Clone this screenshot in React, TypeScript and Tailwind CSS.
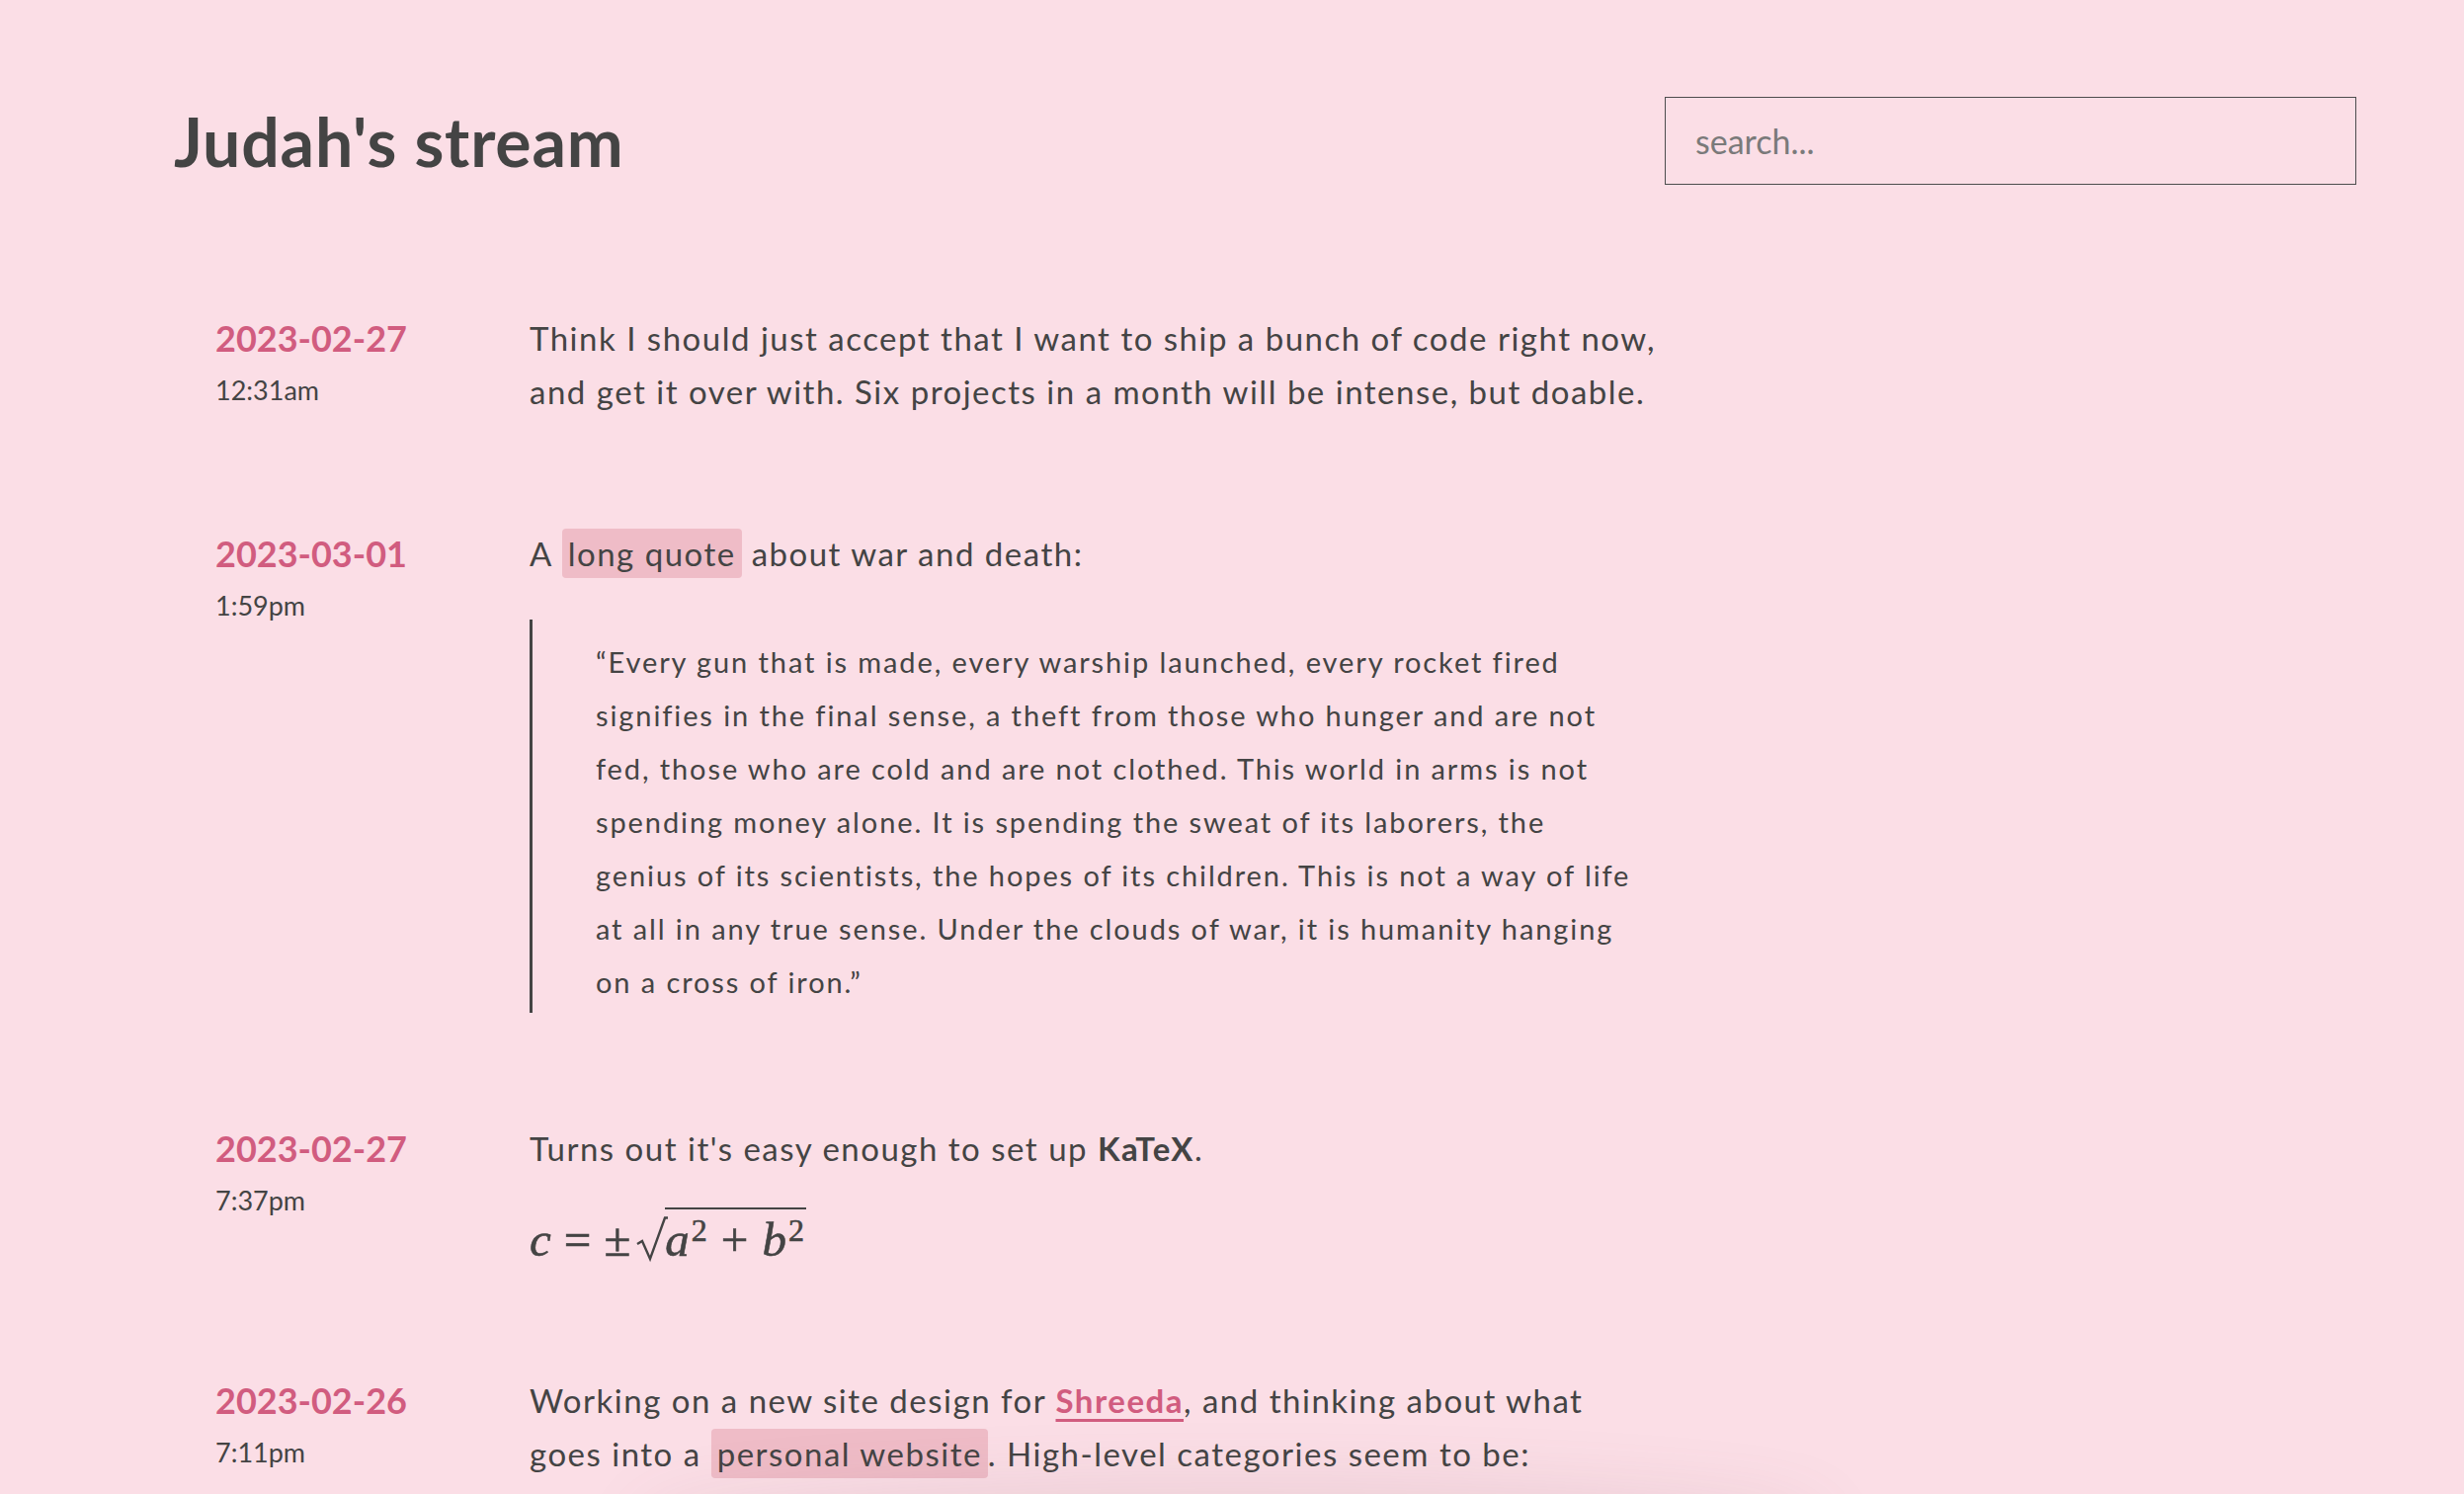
import React from "react";

function Hl({ children }: { children: React.ReactNode }) {
  return (
    <span className="rounded-[4px] bg-[#efbcc7] px-[6px] py-[5px]">{children}</span>
  );
}

function Entry({
  date,
  time,
  children,
}: {
  date: string;
  time: string;
  children: React.ReactNode;
}) {
  return (
    <div className="grid grid-cols-[318px_1150px]">
      <div className="flex flex-col">
        <div className="text-[36px] font-bold leading-[54px] text-[#d15c7f]">{date}</div>
        <div className="mt-[6px] text-[27px] leading-[40px]">{time}</div>
      </div>
      <div className="text-[33px] leading-[54px] tracking-[1.5px]">{children}</div>
    </div>
  );
}

function Radical() {
  return (
    <svg width="32" height="48" viewBox="0 0 32 48" className="block">
      <path
        d="M1 28 L6 25 L14 43 L29 1.5 L32 1.5"
        fill="none"
        stroke="#444"
        strokeWidth="2.4"
        strokeLinejoin="miter"
      />
    </svg>
  );
}

function Formula() {
  return (
    <div className="mt-[33px] mb-[1px] flex items-end font-['Liberation_Serif'] text-[49px] leading-none tracking-normal text-[#444] [-webkit-text-stroke:0.6px_#444]">
      <i>c</i>
      <span className="mx-[13px]">=</span>
      <span>±</span>
      <span className="ml-[6px] flex items-end">
        <Radical />
        <span className="-ml-[3px] flex items-end border-t-[2px] border-[#444] pt-[6px] pr-[2px]">
          <i>a</i>
          <span className="relative -top-[18px] ml-[2px] text-[32px]">2</span>
          <span className="mx-[14px]">+</span>
          <i>b</i>
          <span className="relative -top-[18px] ml-[2px] text-[32px]">2</span>
        </span>
      </span>
    </div>
  );
}

const quoteLines = [
  "“Every gun that is made, every warship launched, every rocket fired",
  "signifies in the final sense, a theft from those who hunger and are not",
  "fed, those who are cold and are not clothed. This world in arms is not",
  "spending money alone. It is spending the sweat of its laborers, the",
  "genius of its scientists, the hopes of its children. This is not a way of life",
  "at all in any true sense. Under the clouds of war, it is humanity hanging",
  "on a cross of iron.”",
];

export default function App() {
  return (
    <div className="relative h-screen overflow-hidden bg-[#fbdee6] font-['Lato',sans-serif] text-[#444]">
      <header className="flex items-center justify-between pl-[176px] pr-[109px] pt-[98px]">
        <h1 className="text-[68px] font-bold leading-[89px] tracking-[0.8px]">Judah's stream</h1>
        <input
          placeholder="search..."
          className="h-[89px] w-[700px] border-[1.5px] border-[#4d4d4d] bg-transparent px-[30px] text-[34px] text-[#444] outline-none placeholder:text-[#7a7a7a]"
        />
      </header>

      <main className="flex flex-col gap-[110px] pl-[218px] pt-[128px]">
        <Entry date="2023-02-27" time="12:31am">
          <p>
            Think I should just accept that I want to ship a bunch of code right now, and get it over
            with. Six projects in a month will be intense, but doable.
          </p>
        </Entry>

        <Entry date="2023-03-01" time="1:59pm">
          <p>
            A <Hl>long quote</Hl> about war and death:
          </p>
          <blockquote className="mt-[40px] w-[1180px] border-l-[3px] border-[#444] pl-[64px] pt-[16px] pb-[4px] text-[29px] leading-[54px] tracking-[1.9px]">
            {quoteLines.map((l, i) => (
              <span key={i} className="block whitespace-nowrap">
                {l}
              </span>
            ))}
          </blockquote>
        </Entry>

        <Entry date="2023-02-27" time="7:37pm">
          <p>
            Turns out it's easy enough to set up <strong className="font-bold">KaTeX</strong>.
          </p>
          <Formula />
        </Entry>

        <Entry date="2023-02-26" time="7:11pm">
          <p>
            Working on a new site design for{" "}
            <a
              href="#"
              className="font-bold text-[#d15c7f] underline decoration-[3px] underline-offset-[6px]"
            >
              Shreeda
            </a>
            , and thinking about what
            <br />
            goes into a <Hl>personal website</Hl>. High-level categories seem to be:
          </p>
        </Entry>
      </main>

      <div className="pointer-events-none absolute bottom-[-70px] left-1/2 h-[70px] w-[1200px] -translate-x-1/2 rounded-[50%] shadow-[0_0_70px_10px_rgba(120,90,100,0.12)]" />
    </div>
  );
}
